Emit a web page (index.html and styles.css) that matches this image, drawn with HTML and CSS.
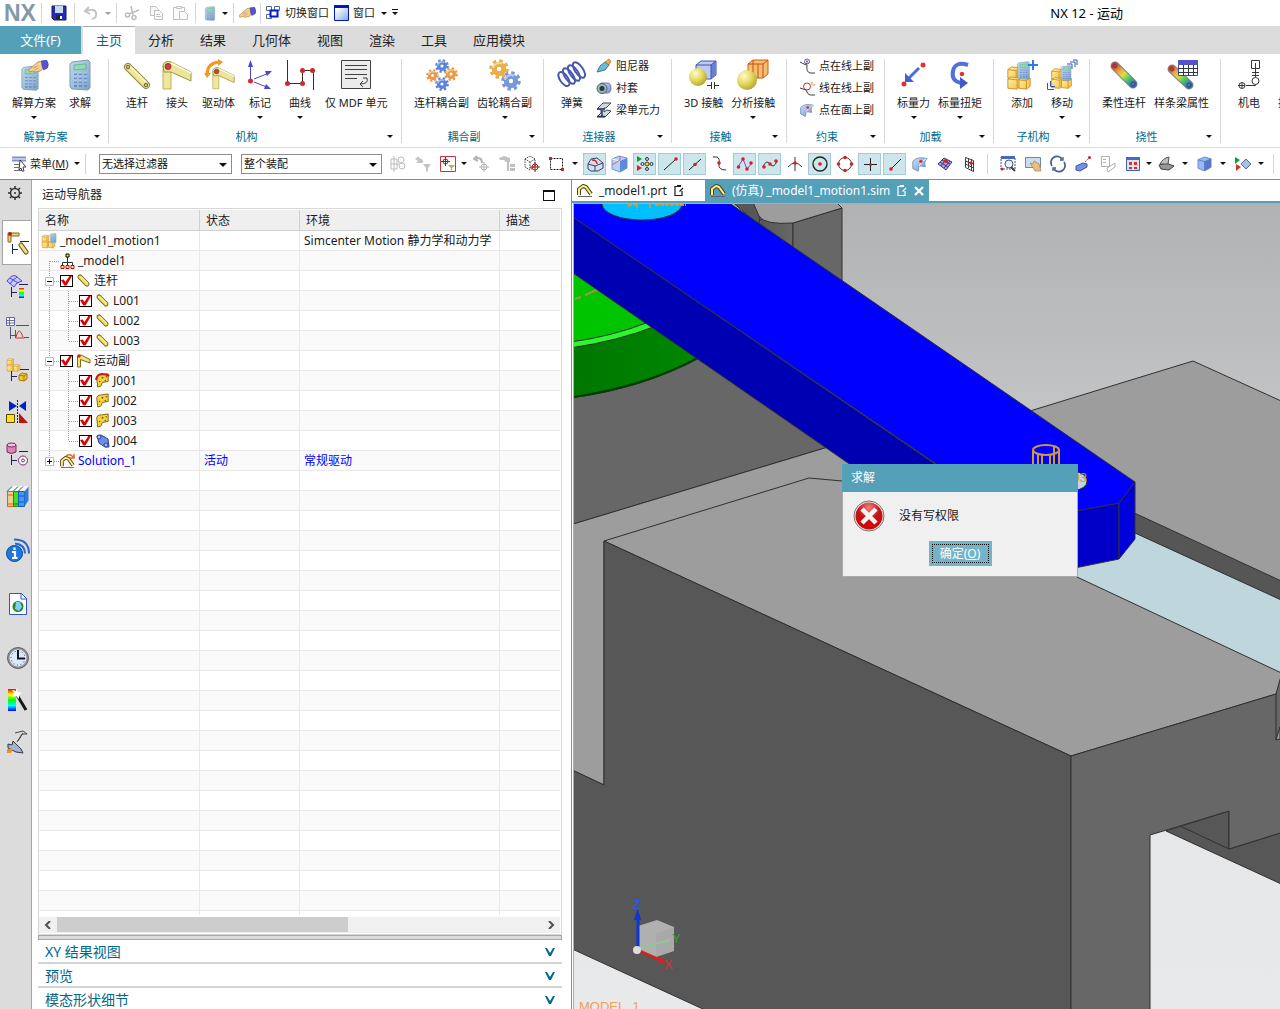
FILE: index.html
```html
<!DOCTYPE html>
<html lang="zh-CN">
<head>
    <meta charset="UTF-8">
    <meta name="viewport" content="width=device-width, initial-scale=1.0">
    <title>NX 12 - 运动</title>
    <link rel="stylesheet" href="styles.css">
</head>
<body>

<!-- Shared icon shapes -->
<svg class="sprite" aria-hidden="true">
    <defs>
        <linearGradient id="gBlue" x1="0" y1="0" x2="1" y2="1"><stop offset="0" stop-color="#cfe0f8"/><stop offset="1" stop-color="#6f8fd0"/></linearGradient>
        <linearGradient id="gCalc" x1="0" y1="0" x2="1" y2="1"><stop offset="0" stop-color="#c4dcec"/><stop offset="1" stop-color="#7ba3c4"/></linearGradient>
        <linearGradient id="gGold" x1="0" y1="0" x2="1" y2="1"><stop offset="0" stop-color="#fff4b0"/><stop offset="1" stop-color="#f4c03c"/></linearGradient>
        <radialGradient id="gBall" cx=".35" cy=".3" r=".8"><stop offset="0" stop-color="#fffbd0"/><stop offset=".5" stop-color="#e4d85c"/><stop offset="1" stop-color="#a89a2c"/></radialGradient>
        <linearGradient id="gRainbow" gradientUnits="userSpaceOnUse" x1="5" y1="6" x2="24" y2="26"><stop offset="0" stop-color="#e03030"/><stop offset=".3" stop-color="#f0a840"/><stop offset=".5" stop-color="#d8e040"/><stop offset=".7" stop-color="#50d060"/><stop offset="1" stop-color="#3060d0"/></linearGradient>
        <linearGradient id="gSpectrum" x1="0" y1="0" x2="0" y2="1"><stop offset="0" stop-color="#f00"/><stop offset=".25" stop-color="#ff0"/><stop offset=".5" stop-color="#0f0"/><stop offset=".75" stop-color="#0ff"/><stop offset="1" stop-color="#00f"/></linearGradient>
        <linearGradient id="gWin" x1="0" y1="0" x2="1" y2="1"><stop offset=".2" stop-color="#fff"/><stop offset="1" stop-color="#7fa8e0"/></linearGradient>
        <radialGradient id="gRed" cx=".5" cy=".2" r=".9"><stop offset="0" stop-color="#f08080"/><stop offset=".45" stop-color="#c41414"/><stop offset="1" stop-color="#d80000"/></radialGradient>
    </defs>
    <symbol id="calc" viewBox="0 0 22 32">
        <path d="M3 3 19 1 21 3V29L19 31 3 30 1 28V5z" fill="url(#gCalc)" stroke="#7c9cb4"/>
        <path d="M5 6 17 5v5L5 11z" fill="#8ce0b0" stroke="#5c9c84" stroke-width=".6"/>
        <path d="M5 15h3m2 0h3m2 0h3M5 19h3m2 0h3m2 0h3M5 23h3m2 0h3m2 0h3M5 27h3m2 0h3m2 0h3" stroke="#6c8cd0" stroke-width="2.2"/>
        <path d="M5 14h3m2 0h3m2 0h3M5 18h3m2 0h3m2 0h3M5 22h3m2 0h3m2 0h3" stroke="#c8dcf8" stroke-width=".8"/>
    </symbol>
    <symbol id="hand" viewBox="0 0 20 14">
        <path d="M0 10 6 5 9 2l5-1 2 6-4 4-5 1-3-1-3 1z" fill="#f4cf94" stroke="#b88440" stroke-width=".8"/>
        <path d="M5 8 9 6M6 10l4-2" stroke="#b88440" stroke-width=".7"/>
        <path d="M13 1 18 0q3 4 1 8l-4 2q-2-4-2-9z" fill="#5454d0" stroke="#3838a0" stroke-width=".6"/>
    </symbol>
    <symbol id="link" viewBox="0 0 30 30">
        <path d="M6 7 24 25" stroke="#8c8440" stroke-width="8" stroke-linecap="round"/>
        <path d="M6 7 24 25" stroke="#f0e898" stroke-width="6" stroke-linecap="round"/>
        <path d="M8 6 25 23" stroke="#fcf8d0" stroke-width="1.5"/>
        <circle cx="6" cy="7" r="1.800" fill="#c0b878" stroke="#706838"/><circle cx="24" cy="25" r="1.800" fill="#c0b878" stroke="#706838"/>
    </symbol>
    <!-- Small link, heavier outline for 15px use -->
    <symbol id="link-s" viewBox="0 0 15 15">
        <path d="M4 4 11 11" stroke="#7c6c18" stroke-width="5" stroke-linecap="round"/>
        <path d="M4 4 11 11" stroke="#f8e468" stroke-width="3" stroke-linecap="round"/>
        <path d="M5 3.500 11.500 10" stroke="#fffcc8"/>
    </symbol>
    <symbol id="joint" viewBox="0 0 30 30">
        <path d="M1 6V29H9V11z" fill="#f0e898" stroke="#b0a04c" stroke-width=".8"/>
        <path d="M1 5Q3 0 9 2L29 12V21L9 12 2 12z" fill="#ece498" stroke="#9c9048"/>
        <path d="M9 3 29 13" stroke="#fffce0" stroke-width="1.5"/>
        <circle cx="6" cy="6.500" r="3" fill="#d03c3c" stroke="#80402c"/>
    </symbol>
    <symbol id="joint-s" viewBox="0 0 15 15">
        <path d="M1.500 3V14H4.500V6.500L14 10V6.500L5 2z" fill="#f4e480" stroke="#7c6c18"/>
        <circle cx="3" cy="3" r="1.800" fill="#c03020"/>
    </symbol>
    <symbol id="gear" viewBox="0 0 20 20">
        <circle cx="10" cy="10" r="8" fill="none" stroke="currentColor" stroke-width="3.600" stroke-dasharray="3.300 2.980"/>
        <circle cx="10" cy="10" r="4.700" fill="none" stroke="currentColor" stroke-width="5"/>
        <path d="M4 9a6 6 0 0 1 9-4" fill="none" stroke="#fff" stroke-width="2" opacity=".5"/>
    </symbol>
    <symbol id="boxes" viewBox="0 0 28 26">
        <g fill="url(#gGold)" stroke="#d08c20">
            <path d="M2 4 6 1l8 1v9l-3 3-9-1z"/><path d="M2 4l9 1 3-3M11 5v8" fill="none"/>
            <path d="M2 14l4-2 9 1v9l-3 3-10-1z"/><path d="M2 14l10 1 3-2M12 15v9" fill="none"/>
            <path d="M14 15l3-3 9 1v9l-4 3-8-1z"/><path d="M14 15l8 1 4-3M22 16v9" fill="none"/>
        </g>
    </symbol>
    <symbol id="jointy" viewBox="0 0 16 16">
        <path d="M2 7Q1 2 7 2L14 1V9L8 10 6 14 3 15z" fill="#f8d444" stroke="#80600c"/>
        <circle cx="8" cy="5" r="1" fill="#705408"/><circle cx="12" cy="4" r=".8" fill="#705408"/><circle cx="5" cy="9" r=".8" fill="#705408"/><circle cx="11" cy="8" r=".8" fill="#705408"/>
    </symbol>
    <symbol id="mech" viewBox="0 0 16 13">
        <path d="M2 11V5L6 2l3 1 5 7" fill="none" stroke="#504810" stroke-width="4" stroke-linejoin="round"/>
        <path d="M2 11V5L6 2l3 1 5 7" fill="none" stroke="#f8ec90" stroke-width="2" stroke-linejoin="round"/>
        <path d="M1 12.500h14" stroke="#666"/>
    </symbol>
    <symbol id="cube" viewBox="0 0 16 16">
        <path d="M1 4 8 1l7 2v9l-7 4-7-3z" fill="#9cb8f0" stroke="#4868b8" stroke-width=".7"/>
        <path d="M1 4l7 2v10M8 6l7-3" fill="none" stroke="#4868b8" stroke-width=".7"/><path d="M8 6l7-3v9l-7 4z" fill="#5878cc"/>
    </symbol>
    <symbol id="edit" viewBox="0 0 12 13"><path d="M7 2.500H2v9h7V7M4 2.500h4M6.500 7.500 10 4" fill="none" stroke="currentColor" stroke-width="1.200"/><path d="M4 1h4v2H4z" fill="currentColor"/></symbol>
    <symbol id="surf" viewBox="0 0 20 20"><path d="M2 7Q7 1 18 4 14 7 16 13L9 12 8 18 2 15z" fill="url(#gBlue)" stroke="#6c94c4"/><path d="M9 12Q12 7 17 4" fill="none" stroke="#fff"/><circle cx="11" cy="7" r="1.800" fill="#d83030"/></symbol>

    <!-- Tree guide lines -->
    <symbol id="g-start" viewBox="0 0 19 20"><path d="M9.500 10V20M10 10.500H19" fill="none" stroke="#999" stroke-dasharray="1 1"/></symbol>
    <symbol id="g-bar" viewBox="0 0 19 20"><path d="M9.500 0V20" stroke="#999" stroke-dasharray="1 1"/></symbol>
    <symbol id="g-tee" viewBox="0 0 19 20"><path d="M9.500 0V20M10 10.500H19" stroke="#999" stroke-dasharray="1 1"/></symbol>
    <symbol id="g-end" viewBox="0 0 19 20"><path d="M9.500 0V10M10 10.500H19" stroke="#999" stroke-dasharray="1 1"/></symbol>
    <symbol id="g-minus" viewBox="0 0 19 20"><path d="M9.500 0V20M14 10.500H19" stroke="#999" stroke-dasharray="1 1"/><path d="M5.500 6.500h8v8h-8z" fill="#fff" stroke="#bbb"/><path d="M7 10.500h5" stroke="#000"/></symbol>
    <symbol id="g-plus" viewBox="0 0 19 20"><path d="M9.500 0V6M14 10.500H19" stroke="#999" stroke-dasharray="1 1"/><path d="M5.500 6.500h8v8h-8z" fill="#fff" stroke="#bbb"/><path d="M7 10.500h5M9.500 8v5" stroke="#000"/></symbol>
</svg>

<header class="titlebar">
    <span class="logo">NX</span>
    <i class="sep"></i>
    <button class="qa" aria-label="保存"><svg width="16" height="16"><path d="M1 1h14v14H3l-2-2z" fill="#2828c0" stroke="#182048"/><path d="M4 1h8v7H4z" fill="#c8dcf0"/><path d="M5 10h6v5H5z" fill="#202838"/><path d="M9 11h2v3H9z" fill="#fff"/></svg></button>
    <i class="sep"></i>
    <button class="qa" aria-label="撤销"><svg width="16" height="16"><path d="M6 2 2 6l5 3M3 6q9-3 10 2t-4 6" fill="none" stroke="#c4c4c4" stroke-width="2"/></svg></button>
    <i class="caret dim"></i>
    <i class="sep"></i>
    <button class="qa" aria-label="剪切"><svg width="16" height="16" fill="none" stroke="#bcbcbc" stroke-width="1.500"><path d="M7 1 9 10M15 5 5 9"/><circle cx="3.500" cy="10" r="2"/><circle cx="10" cy="12.500" r="2"/></svg></button>
    <button class="qa" aria-label="复制"><svg width="16" height="16" fill="#fafafa" stroke="#c0c0c0"><path d="M2.500 1.500h5l3 3v6h-8z"/><path d="M6.500 5.500h5l3 3v6h-8z"/><path d="M8 9.500h4M8 11.500h5" /></svg></button>
    <button class="qa" aria-label="粘贴"><svg width="17" height="16" fill="#fafafa" stroke="#c0c0c0"><path d="M1.500 2.500h11v12h-11z"/><path d="M4.500 1.500h5v2h-5z"/><path d="M7.500 6.500h5l3 3v5h-8z"/></svg></button>
    <i class="sep"></i>
    <button class="qa narrow" aria-label="求解"><svg width="12" height="15"><use href="#calc"/></svg></button>
    <i class="caret"></i>
    <i class="sep"></i>
    <button class="qa narrow" aria-label="触摸"><svg width="17" height="12"><use href="#hand"/></svg></button>
    <i class="sep"></i>
    <button class="qa-text"><svg width="16" height="16" fill="#fff"><path d="M1.500 1.500h5v4h-5zM9.500 1.500h5v4h-5zM1.500 9.500h5v4h-5z" stroke="#506880"/><path d="M5.500 5.500h7v6h-7z" stroke="#0018d8" stroke-width="2"/></svg>切换窗口</button>
    <button class="qa-text"><svg width="15" height="16"><path d="M.500.500h14v15H.500z" fill="url(#gWin)" stroke="#0018c0"/><path d="M0 0h15v3H0z" fill="#0018c0"/></svg>窗口<i class="caret"></i></button>
    <i class="caret bar"></i>
    <h1 class="app-title">NX 12 - 运动</h1>
</header>

<nav class="tabs">
    <button class="tab file">文件(F)</button>
    <button class="tab active">主页</button>
    <button class="tab">分析</button>
    <button class="tab">结果</button>
    <button class="tab">几何体</button>
    <button class="tab">视图</button>
    <button class="tab">渲染</button>
    <button class="tab">工具</button>
    <button class="tab">应用模块</button>
</nav>

<section class="ribbon">
    <div class="group g-solution">
        <div class="tools">
            <button class="big"><svg width="30" height="32"><use href="#calc" x="2" y="6" width="18" height="26"/><use href="#hand" x="9" y="1" width="21" height="14"/></svg>解算方案<i class="caret"></i></button>
            <button class="big"><svg width="22" height="32"><use href="#calc"/></svg>求解</button>
        </div>
        <div class="group-name">解算方案<i class="caret"></i></div>
    </div>
    <div class="group g-mech">
        <div class="tools">
            <button class="big"><svg width="30" height="30"><use href="#link"/></svg>连杆</button>
            <button class="big"><svg width="30" height="30"><use href="#joint"/></svg>接头</button>
            <button class="big"><svg width="32" height="32"><use href="#joint" x="9" y="7" width="23" height="24"/><path d="M4 16Q4 4 16 3" fill="none" stroke="#f09820" stroke-width="3"/><path d="M15 0 20 3 15 7zM1 14h7l-4 5z" fill="#f09820"/></svg>驱动体</button>
            <button class="big"><svg width="30" height="32" stroke="#4848d0"><path d="M5.500 20V4M9 20 24 14M9 23 24 29"/><path d="M5.500 1l2.500 7H3zM27 12l-5 5-2-5zM26 30l-7 0 2-5z" fill="#4848d0" stroke="none"/><circle cx="5.500" cy="22" r="2.500" fill="#e02828" stroke="none"/></svg>标记<i class="caret"></i></button>
            <button class="big"><svg width="30" height="32"><path d="M2.500 1V24.500H17.500V11.500H28.500V31" fill="none" stroke="#303030"/><g fill="#d02828"><circle cx="2.500" cy="24.500" r="2.500"/><circle cx="17.500" cy="24.500" r="2.500"/><circle cx="17.500" cy="11.500" r="2.500"/><circle cx="27.500" cy="11.500" r="2.500"/></g></svg>曲线<i class="caret"></i></button>
            <button class="big"><svg width="30" height="30"><path d="M.500.500h29v28h-29z" fill="#ececec" stroke="#404040"/><path d="M4 5.500h22M4 9.500h22M4 14.500h22M4 18.500h12M22 18h4q2 6-7 6M22 21l-3 3 3 3" fill="none" stroke="#404040"/></svg>仅 MDF 单元</button>
        </div>
        <div class="group-name">机构<i class="caret"></i></div>
    </div>
    <div class="group g-couple">
        <div class="tools">
            <button class="big"><svg width="32" height="32"><g color="#5c84dc"><use href="#gear" x="9" y="0" width="14" height="14"/><use href="#gear" x="9" y="18" width="14" height="14"/></g><g color="#e89c48"><use href="#gear" x="0" y="10" width="13" height="13"/><use href="#gear" x="18" y="8" width="14" height="14"/></g></svg>连杆耦合副</button>
            <button class="big"><svg width="32" height="32"><use href="#gear" x="0" y="0" width="20" height="20" color="#e8b048"/><use href="#gear" x="12" y="12" width="20" height="20" color="#7898dc"/></svg>齿轮耦合副<i class="caret"></i></button>
        </div>
        <div class="group-name">耦合副<i class="caret"></i></div>
    </div>
    <div class="group g-connect">
        <div class="tools">
            <button class="big"><svg width="30" height="30" fill="none" stroke="#4858b0" stroke-width="2"><ellipse cx="7" cy="19" rx="4" ry="8" transform="rotate(-35 7 19)"/><ellipse cx="12" cy="16" rx="4" ry="9" transform="rotate(-35 12 16)"/><ellipse cx="17" cy="13" rx="4" ry="9" transform="rotate(-35 17 13)"/><ellipse cx="22" cy="10" rx="4" ry="9" transform="rotate(-35 22 10)"/></svg>弹簧</button>
            <div class="small-list">
                <button class="small"><svg width="16" height="16"><path d="M1 14 4 8 9 4l4 3-4 5z" fill="#70b8dc" stroke="#38789c"/><path d="M9 4l4-3 2 2-2 4z" fill="#f0a848" stroke="#a06820" stroke-width=".6"/></svg>阻尼器</button>
                <button class="small"><svg width="16" height="16"><path d="M5 3h6q4 0 4 5t-4 5H5z" fill="url(#gBlue)" stroke="#6878a8"/><circle cx="6" cy="8.500" r="5" fill="#9cb8b0" stroke="#506070"/><circle cx="6" cy="8.500" r="2.500" fill="#283848"/></svg>衬套</button>
                <button class="small"><svg width="16" height="16"><path d="M1 7 7 1h8l-5 5H8v4l3-2 4 1-6 6H1l4-4V7z" fill="#d4d8e0" stroke="#404858"/><path d="M1 7h8M6 8v6M1 14.500h8" stroke="#2c3468" stroke-width="1.500"/></svg>梁单元力</button>
            </div>
        </div>
        <div class="group-name">连接器<i class="caret"></i></div>
    </div>
    <div class="group g-contact">
        <div class="tools">
            <button class="big"><svg width="30" height="32"><path d="M7 6 12 2h15v14l-5 4H7z" fill="#bccbf4" stroke="#4050b8"/><path d="M22 6l5-4v14l-5 4z" fill="#6c80d0"/><path d="M7 6h15l5-4M22 6v14" fill="none" stroke="#4050b8"/><circle cx="9" cy="18" r="9" fill="url(#gBall)"/><path d="M18 26.500h4M26 26.500h4M22.500 23v7M25.500 23v7" stroke="#303030"/></svg>3D 接触</button>
            <button class="big"><svg width="32" height="32"><path d="M11 5 16 1h15v14l-5 4H11z" fill="#f8c068" stroke="#c46020"/><path d="M11 5h15l5-4M16 1v15M21 5v14M26 5v14" fill="none" stroke="#c84c20"/><circle cx="10" cy="21" r="10" fill="url(#gBall)"/></svg>分析接触<i class="caret"></i></button>
        </div>
        <div class="group-name">接触<i class="caret"></i></div>
    </div>
    <div class="group g-constrain">
        <div class="tools">
            <div class="small-list">
                <button class="small"><svg width="16" height="16" fill="none" stroke="#404040"><path d="M1 4l6 3 1-2M8 7q-1 7 3 8h5"/><circle cx="8" cy="3.500" r="2.500" stroke="#4858c8"/><circle cx="8" cy="3.500" r="1" fill="#e02020" stroke="none"/></svg>点在线上副</button>
                <button class="small"><svg width="16" height="16" fill="none" stroke="#404040"><path d="M1 8l6 2q2 5 4 5h5"/><circle cx="8" cy="6.500" r="3.500" stroke="#d03030"/><path d="M13 2v3M15 4v2" stroke="#e08030"/></svg>线在线上副</button>
                <button class="small"><svg width="16" height="16"><use href="#surf"/></svg>点在面上副</button>
            </div>
        </div>
        <div class="group-name">约束<i class="caret"></i></div>
    </div>
    <div class="group g-load">
        <div class="tools">
            <button class="big"><svg width="30" height="32"><path d="M20 9 9 20" stroke="#4c6ce0" stroke-width="3"/><path d="M6 23V14l9 9z" fill="#4060d8"/><circle cx="24" cy="6" r="2.500" fill="#e03030"/><circle cx="5" cy="25" r="2.500" fill="#e03030"/></svg>标量力<i class="caret"></i></button>
            <button class="big"><svg width="26" height="32"><path d="M21 6Q8 2 6 12T14 24" fill="none" stroke="#5070dc" stroke-width="4"/><path d="M13 18l8 6-8 6z" fill="#4058c8"/><circle cx="15" cy="15" r="2.200" fill="#e03030"/></svg>标量扭矩<i class="caret"></i></button>
        </div>
        <div class="group-name">加载<i class="caret"></i></div>
    </div>
    <div class="group g-sub">
        <div class="tools">
            <button class="big"><svg width="32" height="32"><use href="#boxes" x="0" y="6" width="26" height="26"/><use href="#calc" x="11" y="2" width="13" height="19"/><path d="M27 1v10M22 6h10" stroke="#2c7ce8" stroke-width="2"/></svg>添加</button>
            <button class="big"><svg width="32" height="32"><use href="#boxes" x="4" y="8" width="23" height="23"/><use href="#calc" x="14" y="6" width="12" height="16"/><path d="M21 5h5v5M24 3h5v5M27 1h4v5" fill="none" stroke="#3850b8"/><path d="M1.500 24v6.500H8M4.500 22v5.500H9" fill="none" stroke="#3850b8"/></svg>移动<i class="caret"></i></button>
        </div>
        <div class="group-name">子机构<i class="caret"></i></div>
    </div>
    <div class="group g-flex">
        <div class="tools">
            <button class="big"><svg width="30" height="32"><path d="M6 7 24 25" stroke="#788880" stroke-width="9" stroke-linecap="round"/><path d="M6 7 24 25" stroke="url(#gRainbow)" stroke-width="7" stroke-linecap="round"/><circle cx="6" cy="7" r="2" fill="#b44040" stroke="#704848"/><circle cx="24" cy="25" r="2" fill="#5078b0" stroke="#384868"/></svg>柔性连杆</button>
            <button class="big"><svg width="32" height="32"><path d="M6 10 23 26" stroke="#788880" stroke-width="9" stroke-linecap="round"/><path d="M6 10 23 26" stroke="url(#gRainbow)" stroke-width="7" stroke-linecap="round"/><circle cx="6" cy="10" r="2" fill="#b44040" stroke="#704848"/><circle cx="23" cy="26" r="2" fill="#5078b0" stroke="#384868"/><path d="M12.500 1.500h19v15h-19z" fill="#fff" stroke="#404888"/><path d="M12 1h20v5H12z" fill="#5454c8"/><path d="M12 9.500h20M12 13.500h20M17.500 6v11M22.500 6v11M27.500 6v11" stroke="#303848"/></svg>样条梁属性</button>
        </div>
        <div class="group-name">挠性<i class="caret"></i></div>
    </div>
    <div class="group g-control">
        <div class="tools">
            <button class="big"><svg width="24" height="32" fill="none" stroke="#383838"><path d="M14.500 1.500h8v8h-8zM18.500 4v14M15 13.500h7M15 16.500h7"/><circle cx="18.500" cy="22" r="3.500"/><path d="M18.500 25.500v1H9"/><circle cx="5" cy="26.500" r="3"/><path d="M1 26.500h7M5 24v5"/></svg>机电</button>
            <button class="big"><svg width="24" height="32"></svg>控制</button>
        </div>
    </div>
</section>

<section class="toolbar">
    <button class="menu-btn"><svg width="16" height="16"><path d="M1 1.500h14M1 4.500h14" stroke="#8090c8" stroke-width="2"/><path d="M3 8.500h8M3 11.500h8M3 14.500h8" stroke="#707070"/><path d="M9 4l6 7-3 0 1 4-2 0-1-3-2 2z" fill="#fff" stroke="#404040"/></svg>菜单(<u>M</u>)<i class="caret"></i></button>
    <i class="sep"></i>
    <label class="combo filter"><select aria-label="选择过滤器"><option>无选择过滤器</option></select></label>
    <label class="combo scope"><select aria-label="选择范围"><option>整个装配</option></select></label>
    <div class="icons">
        <button class="ic" aria-label="约束"><svg width="18" height="18" fill="none" stroke="#bcbcbc"><path d="M2 4h6v10H2zM5 1v16M2 9h8"/><circle cx="12" cy="5" r="3"/><circle cx="13" cy="11" r="3"/></svg></button>
        <button class="ic" aria-label="重置过滤器"><svg width="18" height="18" fill="#c4c4c4"><path d="M1 4l4-3v2q5 1 4 5H2l2-2zM9 9h8l-3 4v4l-2-1v-3z"/></svg></button>
        <button class="ic" aria-label="捕捉过滤器"><svg width="16" height="16"><path d="M.5.500h15v15H.500z" fill="#fff" stroke="#d03040"/><circle cx="5.500" cy="5.500" r="2.500" fill="none" stroke="#404040"/><path d="M5.500 1v9M1 5.500h9" stroke="#404040"/><path d="M8 9h7l-3 3v3l-1-1v-2z" fill="#e8a020"/></svg></button>
        <i class="caret"></i>
        <button class="ic" aria-label="取消选择"><svg width="18" height="18" fill="none" stroke="#b4b4b4"><path d="M4 1 1 4l4 2M1 4q8-3 8 4" stroke-width="2"/><circle cx="11" cy="12" r="3"/><path d="M11 7v10M6 12h10"/></svg></button>
        <button class="ic" aria-label="在导航器中查找"><svg width="18" height="18" fill="#c0c0c0"><path d="M1 3l5-2 6 2v4H8L6 5H2zM9 7h2v9H9zM12 9h5v3h-5zM12 13h5v3h-5z"/></svg></button>
        <button class="ic" aria-label="选择对象"><svg width="18" height="18" fill="none" stroke="#404040"><path d="M2 4 7 1l5 3v7l-5 4-5-3zM2 4l5 3 5-3M7 7v7" stroke-dasharray="1.500 1"/><circle cx="12" cy="12" r="3" stroke="#c02020"/><path d="M12 7v10M7 12h10" stroke="#802020"/></svg></button>
        <button class="ic" aria-label="矩形选择"><svg width="18" height="16"><path d="M2.500 2.500h12v11h-12z" fill="none" stroke="#202020" stroke-dasharray="2 1"/><path d="M1 1h3v3H1zM13 12h3v3h-3z" fill="#d02020"/></svg></button>
        <i class="caret wide"></i>
        <button class="ic on" aria-label="面选择"><svg width="18" height="18"><path d="M2 9 5 4l6-1 6 5v5l-5 3H5l-3-2z" fill="#d4e0f0" stroke="#384060"/><path d="M2 9l7 2 8-3M9 11v5" fill="none" stroke="#384060"/><path d="M6 5q5 0 5 4" fill="none" stroke="#e02020" stroke-width="1.500"/></svg></button>
        <button class="ic" aria-label="体选择"><svg width="18" height="18"><path d="M1 4l7-3 8 2v10l-7 4-8-3z" fill="#b4d0f4" stroke="#7098d0"/><path d="M9 6l7-3v10l-7 4z" fill="#5c8cd8"/><path d="M1 4l8 2" stroke="#fff"/><path d="M1 10l8-5v-4" fill="none" stroke="#e06070"/></svg></button>
        <button class="ic on" aria-label="启用捕捉点"><svg width="18" height="18"><path d="M1 1l5 3-5 3z" fill="#10a020"/><path d="M1 10l5 3-5 3z" fill="#e02020"/><circle cx="11" cy="9" r="2" fill="#f8d820" stroke="#404040"/><g fill="none" stroke="#303030"><circle cx="11" cy="4" r="1.500"/><circle cx="11" cy="14" r="1.500"/><circle cx="6.500" cy="9" r="1.500"/><circle cx="15.500" cy="9" r="1.500"/></g></svg></button>
        <button class="ic on" aria-label="端点"><svg width="18" height="18"><path d="M3 15 15 4" stroke="#202020"/><circle cx="15" cy="4" r="1.800" fill="#d82020"/></svg></button>
        <button class="ic on" aria-label="中点"><svg width="18" height="18"><path d="M3 15 15 4" stroke="#202020"/><circle cx="9" cy="9.500" r="1.800" fill="#d82020"/></svg></button>
        <button class="ic" aria-label="控制点"><svg width="18" height="18"><path d="M2 2h4q3 1 2 7t7 6" fill="none" stroke="#303030"/><circle cx="8" cy="8" r="1.800" fill="#d82020"/></svg></button>
        <button class="ic on" aria-label="极点"><svg width="18" height="18"><path d="M2 12 7 4l4 10 5-6" fill="none" stroke="#8040c0"/><g fill="#d82020"><circle cx="2.500" cy="12" r="1.800"/><circle cx="7" cy="4" r="1.800"/><circle cx="11" cy="14" r="1.800"/><circle cx="15" cy="8" r="1.800"/></g></svg></button>
        <button class="ic on" aria-label="定义点"><svg width="18" height="18"><path d="M2 12q3-8 7-3t7-3" fill="none" stroke="#303030"/><g fill="#d82020"><circle cx="3" cy="12" r="1.800"/><circle cx="9" cy="9" r="1.800"/><circle cx="15" cy="6" r="1.800"/></g></svg></button>
        <button class="ic" aria-label="交点"><svg width="18" height="18"><path d="M9 2v14M2 12q7-8 14 0" fill="none" stroke="#303030"/><circle cx="9" cy="8" r="1.800" fill="#d82020"/></svg></button>
        <button class="ic on" aria-label="圆心"><svg width="18" height="18"><circle cx="9" cy="9" r="7" fill="none" stroke="#202020" stroke-width="1.300"/><circle cx="9" cy="9" r="1.800" fill="#c02020"/></svg></button>
        <button class="ic" aria-label="象限点"><svg width="18" height="18"><circle cx="9" cy="9" r="6.500" fill="none" stroke="#303030"/><g fill="#d82020"><circle cx="9" cy="2.500" r="1.800"/><circle cx="9" cy="15.500" r="1.800"/><circle cx="2.500" cy="9" r="1.800"/><circle cx="15.500" cy="9" r="1.800"/></g></svg></button>
        <button class="ic on" aria-label="现有点"><svg width="18" height="18"><path d="M9.500 3v13M3 9.500h13" stroke="#202020"/><circle cx="9.500" cy="9.500" r="1.500" fill="#c02020"/></svg></button>
        <button class="ic on" aria-label="曲线上的点"><svg width="18" height="18"><path d="M4 15 15 4" stroke="#202020"/><circle cx="5" cy="14" r="1.800" fill="#d82020"/></svg></button>
        <button class="ic" aria-label="面上的点"><svg width="18" height="18"><use href="#surf"/></svg></button>
        <button class="ic" aria-label="小平面顶点"><svg width="18" height="18"><path d="M2 9 8 3l8 4-6 8z" fill="#a8a0e0" stroke="#403880"/><path d="M4 7l8 5M6 5l8 4M5 11l5-7M8 13l6-7" stroke="#403880"/><circle cx="10" cy="6" r="2" fill="#d82020"/></svg></button>
        <button class="ic" aria-label="栅格点"><svg width="18" height="18"><path d="M4.500 2.500l8 3v11l-8-4zM4.500 6l8 3M4.500 9l8 4M7.500 3v10M10.500 4v11" fill="none" stroke="#404040"/><circle cx="10" cy="8" r="1.800" fill="#d82020"/></svg></button>
        <i class="sep"></i>
        <button class="ic" aria-label="适合窗口"><svg width="18" height="18"><path d="M2 2h14v12H2z" fill="none" stroke="#4050a0" stroke-dasharray="2 1"/><path d="M2 1h14v3H2z" fill="#4868c0"/><circle cx="10" cy="9" r="4" fill="#e8f0f8" stroke="#505860"/><path d="M12 12l4 4" stroke="#404040" stroke-width="2"/><circle cx="3" cy="14" r="1.500" fill="#d02020"/></svg></button>
        <button class="ic" aria-label="平移"><svg width="18" height="18"><path d="M1.500 2.500h15v10h-15z" fill="#ccdcf0" stroke="#7088a8"/><path d="M6 8l3 1 1-3 5 3 2 7-6 0z" fill="#e8c080" stroke="#a87c3c" stroke-width=".7"/></svg></button>
        <button class="ic" aria-label="旋转"><svg width="18" height="18" fill="none" stroke="#485890" stroke-width="1.700"><path d="M3 11A6 6 0 0 1 13 4M15 7A6 6 0 0 1 5 14"/><path d="M14 2v3h-3M4 16v-3h3" stroke-width="1.300"/></svg></button>
        <button class="ic" aria-label="透视"><svg width="18" height="18"><path d="M2 11l7-3 4 1v3l-7 4-4-1z" fill="#7890e0" stroke="#4050a8"/><path d="M11 7l4-4" stroke="#e04040" stroke-dasharray="2 1"/><circle cx="15.500" cy="2.500" r="1.500" fill="#d02020"/></svg></button>
        <button class="ic" aria-label="定向视图"><svg width="18" height="18" fill="none" stroke="#b0b0b0"><path d="M2.500 1.500h8v10h-8zM4 4.500h3M4 7.500h3M8 13l8-5v4l-7 5z"/></svg></button>
        <button class="ic" aria-label="视图布局"><svg width="18" height="18"><path d="M2.500 2.500h13v13h-13z" fill="#d8e4f4" stroke="#4060b0"/><path d="M2 2h14v3H2z" fill="#4868c8"/><path d="M5 7h3v3H5zM10 7h3v3h-3zM5 12h3v2H5zM10 12h3v2h-3z" fill="#e03020"/></svg></button>
        <i class="caret"></i>
        <button class="ic" aria-label="剪切截面"><svg width="18" height="18"><path d="M1 10 8 8l8 3-5 4-8-1z" fill="#989898" stroke="#404040"/><path d="M2 9Q5 3 11 2L10 9z" fill="#c0c0c0" stroke="#505050"/></svg></button>
        <i class="caret wide"></i>
        <button class="ic" aria-label="渲染样式"><svg width="15" height="15"><use href="#cube"/></svg></button>
        <i class="caret wide"></i>
        <button class="ic" aria-label="显示和隐藏"><svg width="18" height="18"><path d="M1 2l5 3-5 4z" fill="#10a030"/><path d="M2 9l5 3-5 4z" fill="#d03030"/><path d="M7 9l5-5 5 5-5 5z" fill="#a8c0e8" stroke="#5068a0"/></svg></button>
        <i class="caret wide"></i>
        <i class="sep"></i>
    </div>
</section>

<main class="work">
    <aside class="rail">
        <button class="rb gear-btn" aria-label="设置"><svg width="14" height="14"><circle cx="7" cy="7" r="4.500" fill="none" stroke="#303030" stroke-width="1.500"/><path d="M7 0v3M7 11v3M0 7h3M11 7h3M2 2l2 2M10 10l2 2M12 2l-2 2M4 10l-2 2" stroke="#303030" stroke-width="1.500"/><circle cx="7" cy="7" r="1" fill="#303030"/></svg></button>
        <button class="rb active" aria-label="运动导航器"><svg width="24" height="24"><path d="M1 11V2h11v3H4v6z" fill="#ecd468" stroke="#806820"/><circle cx="3" cy="3" r="2" fill="#c02020"/><path d="M13 10.500h9M5.500 13v10M6 18.500h5" stroke="#202060"/><path d="M14 14l5 7" stroke="#6c5c20" stroke-width="5" stroke-linecap="round"/><path d="M14 14l5 7" stroke="#f0e088" stroke-width="3" stroke-linecap="round"/></svg></button>
        <button class="rb" aria-label="仿真导航器"><svg width="24" height="24"><path d="M1 7Q6 0 10 2l6 5-5 2-3 4z" fill="#c8c8fc" stroke="#4848d0"/><path d="M4 4l8 5M11 3q-5 3-7 7" fill="none" stroke="#4848d0"/><path d="M13 10.500h9M5.500 13v10M6 18.500h5" stroke="#202060"/><path d="M13 14h5v10h-5z" fill="url(#gSpectrum)"/></svg></button>
        <button class="rb" aria-label="XY 函数导航器"><svg width="24" height="24"><path d="M.500 1.500h8v8h-8z" fill="#fff" stroke="#6868a0"/><path d="M1 4.500h8M1 7h8M3.500 2v8" stroke="#6868a0"/><path d="M10 9.500h13M4.500 11v12M5 19.500h5M18 21.500h5" stroke="#505070"/><path d="M9.500 14v8h9M10 21q3-12 7 0" fill="none" stroke="#d02838"/></svg></button>
        <button class="rb" aria-label="装配导航器"><svg width="24" height="24"><use href="#boxes" x="0" y="0" width="15" height="14"/><path d="M14 11.500h9M5.500 13v10M6 18.500h5" stroke="#202060"/><path d="M13 17l3-2 5 1v5l-3 2-5-1z" fill="#f4c430" stroke="#a87810"/><path d="M13 17l5 1 3-2M18 18v5" fill="none" stroke="#a87810"/></svg></button>
        <button class="rb" aria-label="约束导航器"><svg width="24" height="24"><path d="M3 1l8 5-8 5zM20 1l-7 5 7 5z" fill="#0020c8"/><path d="M11.500 0v24" stroke="#202020" stroke-dasharray="2 1"/><path d="M.500 14.500h8v8h-8z" fill="#ffe020" stroke="#604800"/><path d="M13 13l9 10h-9z" fill="#c01010"/></svg></button>
        <button class="rb" aria-label="部件导航器"><svg width="24" height="24"><path d="M1 3v7q4 3 9 0V3" fill="#d888b8" stroke="#802860"/><ellipse cx="5.500" cy="3" rx="4.500" ry="2" fill="#f0c0dc" stroke="#802860"/><path d="M13 9.500h9M5.500 13v10M6 18.500h5" stroke="#202060"/><circle cx="17" cy="18.500" r="4.500" fill="#fff" stroke="#802870"/><circle cx="17" cy="18.500" r="1.500" fill="#fff" stroke="#802870"/></svg></button>
        <button class="rb" aria-label="重用库"><svg width="24" height="24"><path d="M1 7l5-5h16v14l-4 6H1z" fill="#f8f8f8"/><path d="M1.500 7.500h6v15h-6z" fill="#f4cc90" stroke="#d06810"/><path d="M7.500 7.500h5v15h-5z" fill="#40e020" stroke="#189010"/><path d="M12.500 7.500h6v15h-6z" fill="#38a0f0" stroke="#1858c0"/><path d="M18.500 7.500l4-5v14l-4 6z" fill="#3878e0"/><path d="M1 7.500l5-5M7 7.500l5-5M12 7.500l5-5" stroke="#206040"/><path d="M2 11h5M2 20h5" stroke="#d06810"/><path d="M8 20h4" stroke="#108010"/><path d="M13 12h5M13 18h5" stroke="#1858c0"/></svg></button>
        <button class="rb spaced" aria-label="HD3D 工具"><svg width="24" height="24"><circle cx="8.500" cy="15.500" r="8" fill="#1c78e0" stroke="#104898"/><path d="M6 14h3v6M6 20h5.500M8.500 9.500v2.500" stroke="#fff" stroke-width="2.200" fill="none"/><path d="M8 1.500q15 0 15 14M9 5.500q10 1 10 10" fill="none" stroke="#2c64cc" stroke-width="2"/></svg></button>
        <button class="rb spaced" aria-label="Web 浏览器"><svg width="20" height="24"><path d="M1.500 1.500h12l5 5v16h-17z" fill="#fff" stroke="#2858c8"/><path d="M13 1v6h6" fill="none" stroke="#2858c8"/><circle cx="10" cy="14.500" r="5.500" fill="#288828"/><path d="M8 10l4 0 2 5-3 4-4-2z" fill="#80d0f0"/></svg></button>
        <button class="rb spaced" aria-label="历史记录"><svg width="24" height="24"><circle cx="12" cy="12" r="10.500" fill="#909498" stroke="#606468"/><circle cx="12" cy="12" r="8.500" fill="#dceafc"/><circle cx="12" cy="12" r="7" fill="none" stroke="#303848" stroke-dasharray="1 2.670"/><path d="M12 4v8.500H19" fill="none" stroke="#101828" stroke-width="2"/></svg></button>
        <button class="rb" aria-label="系统材料"><svg width="22" height="24"><path d="M1 1h8v22H1z" fill="url(#gSpectrum)"/><path d="M10 7l9 15" stroke="#181818" stroke-width="3"/><path d="M10 0l1 4 4 1-3 2 0 4-3-3-4 1 2-4-2-3 4 1z" fill="#fff"/></svg></button>
        <button class="rb" aria-label="加工向导"><svg width="24" height="24"><path d="M9 3l8-2 4 3-5 0-5 8M17 3l-5 8" fill="none" stroke="#404848"/><path d="M2 14l4 1 1-4 3 3 5 5 2 4-7-1-8-4z" fill="#a8b4c8" stroke="#303848"/><path d="M1 19l6 0-2 4-4 0z" fill="#f09020"/></svg></button>
    </aside>

    <section class="navigator">
        <div class="nav-head"><h2>运动导航器</h2><button class="max-btn" aria-label="最大化"></button></div>
        <div class="tree-box">
            <div class="tree-clip">
                <table class="tree">
                    <colgroup><col class="c-name"><col class="c-state"><col class="c-env"><col></colgroup>
                    <thead><tr><th>名称</th><th>状态</th><th>环境</th><th>描述</th></tr></thead>
                    <tbody>
                        <tr><td><div class="node root"><svg width="16" height="16"><use href="#boxes" x="0" y="1" width="15" height="15"/><use href="#calc" x="8" y="0" width="8" height="10"/></svg><span>_model1_motion1</span></div></td><td></td><td>Simcenter Motion 静力学和动力学</td><td></td></tr>
                        <tr><td><div class="node"><svg class="guide"><use href="#g-start"/></svg><svg width="15" height="16"><path d="M7.500 4v5M2.500 12V9.500h10V12M7.500 9v3" fill="none" stroke="#303030"/><path d="M6 1h3v3H6z" fill="#ff0" stroke="#000"/><path d="M1 12.500h3v3H1zM6 12.500h3v3H6zM11 12.500h3v3h-3z" fill="#ff8" stroke="#c00000"/></svg><span>_model1</span></div></td><td></td><td></td><td></td></tr>
                        <tr><td><div class="node"><svg class="guide"><use href="#g-minus"/></svg><input type="checkbox" id="k1" checked><svg width="15" height="15"><use href="#link-s"/></svg><label for="k1">连杆</label></div></td><td></td><td></td><td></td></tr>
                        <tr><td><div class="node"><svg class="guide"><use href="#g-bar"/></svg><svg class="guide"><use href="#g-tee"/></svg><input type="checkbox" id="k2" checked><svg width="15" height="15"><use href="#link-s"/></svg><label for="k2">L001</label></div></td><td></td><td></td><td></td></tr>
                        <tr><td><div class="node"><svg class="guide"><use href="#g-bar"/></svg><svg class="guide"><use href="#g-tee"/></svg><input type="checkbox" id="k3" checked><svg width="15" height="15"><use href="#link-s"/></svg><label for="k3">L002</label></div></td><td></td><td></td><td></td></tr>
                        <tr><td><div class="node"><svg class="guide"><use href="#g-bar"/></svg><svg class="guide"><use href="#g-end"/></svg><input type="checkbox" id="k4" checked><svg width="15" height="15"><use href="#link-s"/></svg><label for="k4">L003</label></div></td><td></td><td></td><td></td></tr>
                        <tr><td><div class="node"><svg class="guide"><use href="#g-minus"/></svg><input type="checkbox" id="k5" checked><svg width="15" height="15"><use href="#joint-s"/></svg><label for="k5">运动副</label></div></td><td></td><td></td><td></td></tr>
                        <tr><td><div class="node"><svg class="guide"><use href="#g-bar"/></svg><svg class="guide"><use href="#g-tee"/></svg><input type="checkbox" id="k6" checked><svg width="15" height="15"><use href="#jointy"/><path d="M1 7q1-6 6-6t7 2" fill="none" stroke="#c81818" stroke-width="2"/></svg><label for="k6">J001</label></div></td><td></td><td></td><td></td></tr>
                        <tr><td><div class="node"><svg class="guide"><use href="#g-bar"/></svg><svg class="guide"><use href="#g-tee"/></svg><input type="checkbox" id="k7" checked><svg width="15" height="15"><use href="#jointy"/></svg><label for="k7">J002</label></div></td><td></td><td></td><td></td></tr>
                        <tr><td><div class="node"><svg class="guide"><use href="#g-bar"/></svg><svg class="guide"><use href="#g-tee"/></svg><input type="checkbox" id="k8" checked><svg width="15" height="15"><use href="#jointy"/></svg><label for="k8">J003</label></div></td><td></td><td></td><td></td></tr>
                        <tr><td><div class="node"><svg class="guide"><use href="#g-bar"/></svg><svg class="guide"><use href="#g-end"/></svg><input type="checkbox" id="k9" checked><svg width="15" height="15"><path d="M2 3l4-1 7 4 1 8-4 0-6-4z" fill="#6c90e4" stroke="#283c98"/><circle cx="4" cy="4" r="2" fill="#a8c0f4" stroke="#283c98"/><circle cx="11" cy="12" r="2" fill="#a8c0f4" stroke="#283c98"/></svg><label for="k9">J004</label></div></td><td></td><td></td><td></td></tr>
                        <tr class="current"><td><div class="node"><svg class="guide"><use href="#g-plus"/></svg><svg width="15" height="16"><use href="#mech" x="0" y="3" width="15" height="12"/><path d="M6 3q4-3 7 1M14 1v4h-4" fill="none" stroke="#e86820" stroke-width="1.500"/></svg><span>Solution_1</span></div></td><td>活动</td><td>常规驱动</td><td></td></tr>
                        <tr><td></td><td></td><td></td><td></td></tr>
                        <tr><td></td><td></td><td></td><td></td></tr>
                        <tr><td></td><td></td><td></td><td></td></tr>
                        <tr><td></td><td></td><td></td><td></td></tr>
                        <tr><td></td><td></td><td></td><td></td></tr>
                        <tr><td></td><td></td><td></td><td></td></tr>
                        <tr><td></td><td></td><td></td><td></td></tr>
                        <tr><td></td><td></td><td></td><td></td></tr>
                        <tr><td></td><td></td><td></td><td></td></tr>
                        <tr><td></td><td></td><td></td><td></td></tr>
                        <tr><td></td><td></td><td></td><td></td></tr>
                        <tr><td></td><td></td><td></td><td></td></tr>
                        <tr><td></td><td></td><td></td><td></td></tr>
                        <tr><td></td><td></td><td></td><td></td></tr>
                        <tr><td></td><td></td><td></td><td></td></tr>
                        <tr><td></td><td></td><td></td><td></td></tr>
                        <tr><td></td><td></td><td></td><td></td></tr>
                        <tr><td></td><td></td><td></td><td></td></tr>
                        <tr><td></td><td></td><td></td><td></td></tr>
                        <tr><td></td><td></td><td></td><td></td></tr>
                        <tr><td></td><td></td><td></td><td></td></tr>
                        <tr><td></td><td></td><td></td><td></td></tr>
                        <tr><td></td><td></td><td></td><td></td></tr>
                    </tbody>
                </table>
            </div>
            <div class="hscroll">
                <button aria-label="向左"><svg width="8" height="8"><path d="M6 0 2 4l4 4" fill="none" stroke="#505050" stroke-width="2"/></svg></button>
                <div class="track"><div class="thumb"></div></div>
                <button aria-label="向右"><svg width="8" height="8"><path d="M2 0l4 4-4 4" fill="none" stroke="#505050" stroke-width="2"/></svg></button>
            </div>
        </div>
        <div class="splitter"></div>
        <button class="fold">XY 结果视图<svg width="12" height="10"><path d="M1 1h2l3 5 3-5h2L7 9H5z" fill="#00688b"/></svg></button>
        <button class="fold">预览<svg width="12" height="10"><path d="M1 1h2l3 5 3-5h2L7 9H5z" fill="#00688b"/></svg></button>
        <button class="fold">模态形状细节<svg width="12" height="10"><path d="M1 1h2l3 5 3-5h2L7 9H5z" fill="#00688b"/></svg></button>
    </section>

    <section class="viewer">
        <div class="doc-tabs">
            <button class="doc"><svg width="16" height="13"><use href="#mech"/></svg>_model1.prt<svg width="12" height="13"><use href="#edit"/></svg></button>
            <button class="doc active"><svg width="16" height="13"><use href="#mech"/></svg>(仿真) _model1_motion1.sim<svg width="12" height="13"><use href="#edit"/></svg><svg width="10" height="10"><path d="M1 1l8 8M9 1 1 9" stroke="#fff" stroke-width="2.200"/></svg></button>
        </div>
        <div class="scene">
            <svg class="model" viewBox="574 204 706 805" preserveAspectRatio="xMinYMin slice">
                <defs>
                    <linearGradient id="sky" gradientUnits="userSpaceOnUse" x1="0" y1="204" x2="0" y2="1009"><stop offset="0" stop-color="#b1b2b4"/><stop offset=".78" stop-color="#e6e7e9"/><stop offset="1" stop-color="#e8e9eb"/></linearGradient>
                    <linearGradient id="fillet" x1="0" x2="1"><stop offset="0" stop-color="#555"/><stop offset="1" stop-color="#686868"/></linearGradient>
                    <linearGradient id="rim" x1="0" x2="1"><stop offset="0" stop-color="#007600"/><stop offset="1" stop-color="#008800"/></linearGradient>
                </defs>
                <rect x="574" y="204" width="706" height="805" fill="url(#sky)"/>
                <g stroke="#303030" stroke-linejoin="round">
                    <!-- rear post -->
                    <path d="M730 200H755L760 219V226z" fill="#575757"/>
                    <path d="M760 219 793 223V250L758 226z" fill="url(#fillet)"/>
                    <path d="M793 223 842 208V284L793 250z" fill="#676767"/>
                    <path d="M752 200 759 216Q764 225 793 223L842 208 834 200z" fill="#9d9d9d"/>
                    <!-- base -->
                    <path d="M570 280 860 440 828 447 570 525z" fill="#676767"/>
                    <path d="M570 525 828 447 1030 411 1193 361 1290 405V720L1276 694 1071 756 604 541V785L570 769z" fill="#9d9d9d"/>
                    <path d="M604 541 809 478 842 481" fill="none"/>
                    <path d="M1130 511 1290 585V605L1130 531z" fill="#565656"/>
                    <path d="M1060 520 1135 533 1290 604V677L1077 577z" fill="#bfd6dc"/>
                    <path d="M570 769 604 785V541L1071 756V1015H716L570 948z" fill="#575757"/>
                    <path d="M1166 831 1229 811V849L1290 830V888z" fill="#575757"/>
                    <path d="M1180 826 1229 849" fill="none"/>
                    <path d="M1071 756 1276 694 1281 676H1290V830L1229 849V811L1150 835V1015H1071z" fill="#676767"/>
                    <path d="M1276 694V740L1280 727V739L1276 740" fill="#9d9d9d"/>
                    <!-- disc -->
                    <path d="M570 270 700 350 696 358Q646 388 570 398z" fill="url(#rim)"/>
                    <path d="M574 397Q646 386 698 358" fill="none" stroke="#003c00" stroke-width="2"/>
                    <path d="M570 270 656 326Q618 341 570 348z" fill="#2cf72c"/>
                    <path d="M570 270 649 322Q610 337 570 342z" fill="#00c400"/>
                    <path d="M575 299l6-2M585 295l14-6" stroke="#9c9450" stroke-width="2"/>
                    <!-- crank bar -->
                    <path d="M570 271 570 215 935 464 1077 560V568L1000 568z" fill="#0000b3"/>
                    <path d="M1060 514 1119 503V559L1060 571z" fill="#0000c8"/>
                    <path d="M1119 503 1135 482V539L1119 559z" fill="#0000dc"/>
                    <path d="M570 200H725L1135 482 1119 503 1060 514 1010 514 570 215z" fill="#00f"/>
                    <ellipse cx="642" cy="204" rx="40" ry="16" fill="#00bfff"/>
                    <ellipse cx="1075" cy="481" rx="12" ry="9" fill="#bfd6dc"/>
                </g>
                <g fill="none" stroke="#d09838">
                    <ellipse cx="1046" cy="450" rx="13" ry="5" stroke-width="2"/>
                    <path d="M1033 450v20M1059 450v20M1038 454v16M1054 446v24M1042 455v15M1050 455v15" stroke-width="2"/>
                    <path d="M628 205h9M637 204v6M629 204v3M650 204v5M655 205h31" stroke-width="2" stroke-dasharray="4 1"/>
                </g>
                <text x="1066" y="482" class="joint-tag">J03</text>
                <!-- view triad -->
                <path d="M638 926 657 920 674 927V951L656 957 638 950z" fill="#b0b0b0"/>
                <path d="M674 927V951L656 957V933z" fill="#a0a0a0" opacity=".4"/>
                <path d="M638 949 670 940" stroke="#90c890" stroke-width="2"/>
                <path d="M638 949V914" stroke="#0838d8" stroke-width="3"/><path d="M637.500 909 641 920H634z" fill="#0838d8"/>
                <path d="M640 951 660 960" stroke="#d82020" stroke-width="3"/><path d="M666 963 656 962 660 956z" fill="#d82020"/>
                <circle cx="637" cy="950" r="4" fill="#ddd"/>
                <text x="633" y="909" class="axis z">Z</text>
                <text x="672" y="943" class="axis y">Y</text>
                <text x="664" y="969" class="axis x">X</text>
                <text x="579" y="1011" class="model-tag">MODEL_1</text>
            </svg>
            <div class="dialog" role="alertdialog" aria-labelledby="dlg-title">
                <h3 id="dlg-title">求解</h3>
                <div class="dialog-body">
                    <svg width="32" height="32"><circle cx="16" cy="16" r="15" fill="#eee" stroke="#707070"/><circle cx="16" cy="16" r="13.500" fill="url(#gRed)"/><path d="M9 9l14 14M23 9 9 23" stroke="#f4f4f4" stroke-width="4.500"/></svg>
                    <p>没有写权限</p>
                </div>
                <button class="ok">确定(<u>O</u>)</button>
            </div>
        </div>
    </section>
</main>

</body>
</html>
```
FILE: styles.css
```css
* { box-sizing: border-box; }
body {
    margin: 0;
    height: 100vh;
    display: flex;
    flex-direction: column;
    overflow: hidden;
    background: #fff;
    color: #1a1a1a;
    font: 12px/16px "Noto Sans", "Noto Sans CJK SC", sans-serif;
}
button {
    font: inherit;
    color: inherit;
    background: none;
    border: 0;
    margin: 0;
    padding: 0;
}
h1, h2, h3, p { margin: 0; font-size: 12px; font-weight: normal; }
svg { display: block; flex: none; }
.sprite { position: absolute; width: 0; height: 0; }

.caret {
    flex: none;
    width: 0;
    height: 0;
    border: 3px solid transparent;
    border-top-color: #111;
    border-bottom: 0;
}
.caret.dim { border-top-color: #999; }
.sep {
    flex: none;
    width: 1px;
    height: 20px;
    background: #d4d4d4;
}

/* Title bar */
.titlebar {
    flex: none;
    display: flex;
    align-items: center;
    height: 26px;
    padding-left: 4px;
    font-size: 11px;
}
.logo {
    width: 37px;
    color: #8299a8;
    font: bold 23px/26px "Liberation Sans", sans-serif;
}
.qa {
    display: flex;
    align-items: center;
    justify-content: center;
    width: 24px;
    height: 24px;
}
.qa.narrow { width: 20px; }
.titlebar .sep { margin: 0 4px 0 3px; }
.titlebar .logo + .sep { margin: 0 5px 0 0; }
.titlebar .caret + .sep { margin-right: 3px; }
.titlebar > .qa + .caret { margin: 0 2px; }
.qa-text {
    display: flex;
    align-items: center;
    gap: 4px;
    margin: 0 5px 0 0;
}
.qa-text .caret { margin-left: 2px; }
.caret.bar { position: relative; }
.caret.bar::before {
    content: "";
    position: absolute;
    left: -3px;
    top: -6px;
    width: 6px;
    height: 1px;
    background: #111;
}
.app-title { margin: 0 157px 0 auto; color: #000; font-size: 13px; }

/* Ribbon tabs */
.tabs {
    flex: none;
    display: flex;
    height: 28px;
    background: #dcdcdc;
    font-size: 13px;
}
.tab { padding: 0 13px 1px; color: #222; }
.tab.file { width: 81px; margin-right: 2px; background: #54a0b9; color: #fff; }
.tab.active { background: #fff; color: #00688b; border-top: 1px solid #aaa; }

/* Ribbon */
.ribbon {
    flex: none;
    display: flex;
    height: 94px;
    padding-top: 5px;
    border-bottom: 1px solid #dcdcdc;
    overflow: hidden;
    font-size: 11px;
}
.group {
    flex: none;
    display: flex;
    flex-direction: column;
    justify-content: space-between;
    height: 84px;
    padding: 0 8px;
    border-right: 1px solid #d8d8d8;
}
.g-solution { width: 109px; }
.g-mech { width: 293px; }
.g-couple { width: 142px; }
.g-connect { width: 128px; }
.g-contact { width: 115px; }
.g-constrain { width: 98px; }
.g-load { width: 109px; }
.g-sub { width: 96px; }
.g-flex { width: 131px; }
.g-control { width: 131px; border: 0; }
.tools { display: flex; }
.big {
    flex: none;
    display: flex;
    flex-direction: column;
    align-items: center;
    min-width: 40px;
    padding: 0 4px;
    line-height: 16px;
    white-space: nowrap;
}
.g-mech .big { padding: 0 5px; }
.big svg { margin-bottom: 4px; }
.big svg[height="30"] { margin: 1px 0 5px; }
.big .caret { margin-top: 5px; }
.small-list { padding: 0 0 0 4px; }
.small {
    display: flex;
    align-items: center;
    gap: 4px;
    height: 22px;
    white-space: nowrap;
}
.small:first-child { height: 14px; margin-bottom: 4px; }
.group-name {
    position: relative;
    padding-right: 17px;
    text-align: center;
    color: #00688b;
    line-height: 12px;
}
.group-name .caret { position: absolute; right: 0; top: 4px; }

/* Selection bar */
.toolbar {
    flex: none;
    display: flex;
    align-items: center;
    height: 32px;
    padding-left: 11px;
    border-bottom: 1px solid #8a8a8a;
    overflow: hidden;
    font-size: 11px;
}
.menu-btn { display: flex; align-items: center; white-space: nowrap; width: 70px; }
.menu-btn svg { margin-right: 3px; }
.menu-btn .caret { margin-left: auto; }
.toolbar .sep { margin: 0 13px 0 5px; }
.combo { position: relative; margin-right: 9px; flex: none; }
.combo select {
    display: block;
    width: 100%;
    height: 20px;
    padding: 0 2px;
    appearance: none;
    border: 1px solid #8c8c8c;
    border-radius: 0;
    background: #fff;
    color: #111;
    font: inherit;
}
.combo::after {
    content: "";
    position: absolute;
    right: 5px;
    top: 9px;
    border: 4px solid transparent;
    border-top-color: #111;
    border-bottom: 0;
}
.combo.filter { width: 133px; }
.combo.scope { width: 141px; margin-right: 4px; }
.icons { display: flex; align-items: center; gap: 2px; }
.ic {
    flex: none;
    display: flex;
    align-items: center;
    justify-content: center;
    width: 23px;
    height: 22px;
}
.ic.on { background: #cde6ec; border: 1px solid #a4ccd8; }
.icons .caret { margin: 0 1px 0 0; }
.icons .caret.wide { margin: 0 3px 0 2px; }
.icons .sep { margin: 0 6px 0 4px; }

/* Work area */
.work { flex: 1; display: flex; min-height: 0; }
.rail {
    flex: none;
    width: 32px;
    padding-left: 2px;
    background: #dcdcdc;
    border-right: 1px solid #a4a4a4;
    overflow: hidden;
}
.rb {
    display: flex;
    align-items: center;
    justify-content: center;
    width: 100%;
    height: 42px;
    padding-left: 3px;
}
.rb.gear-btn { height: 26px; margin-bottom: 14px; padding: 0 3px 0 0; }
.rb.active { height: 45px; width: 30px; background: #fff; border: 1px solid #a4a4a4; border-right: 0; }
.rb.spaced { margin-top: 12px; }

/* Navigator */
.navigator {
    flex: none;
    display: flex;
    flex-direction: column;
    width: 539px;
    padding: 0 9px 0 6px;
}
.nav-head {
    display: flex;
    align-items: center;
    justify-content: space-between;
    height: 28px;
    padding: 2px 7px 0 4px;
}
.max-btn { width: 12px; height: 11px; border: 1px solid #111; border-top-width: 2px; }
.tree-box {
    flex: 1;
    min-height: 0;
    display: flex;
    flex-direction: column;
    border: 1px solid #d8d8d8;
    padding: 1px 1px 1px 0;
}
.tree-clip { flex: 1; min-height: 0; overflow: hidden; margin-bottom: 2px; }
.tree { width: 100%; table-layout: fixed; border-collapse: separate; border-spacing: 0; }
.c-name { width: 161px; }
.c-state { width: 100px; }
.c-env { width: 200px; }
.tree th {
    height: 21px;
    padding: 1px 6px 0;
    background: #efefef;
    border-right: 1px solid #d0d0d0;
    border-bottom: 1px solid #d0d0d0;
    text-align: left;
    font-weight: normal;
}
.tree td {
    height: 20px;
    padding: 0 4px;
    border-right: 1px solid #e8e8e8;
    border-bottom: 1px solid #e8e8e8;
    line-height: 16px;
    white-space: nowrap;
}
.tree td:first-child { padding: 0 0 0 1px; }
.tree th:last-child, .tree td:last-child { border-right: 0; }
.tree tr:nth-child(even) td { background: #fafafa; }
.tree .current { color: #00f; }
.node { display: flex; align-items: center; gap: 3px; height: 19px; }
.node.root { padding-left: 1px; }
.guide { width: 19px; height: 20px; margin-right: -2px; }
.guide + .guide { margin-left: -1px; }
.node input {
    appearance: none;
    position: relative;
    width: 13px;
    height: 12px;
    margin: 0;
    border: 1px solid #000;
    background: #fff;
}
.node input:checked::after {
    content: "";
    position: absolute;
    inset: 0;
    background: #e00000;
    clip-path: polygon(0 45%, 25% 40%, 40% 65%, 80% 0, 100% 5%, 50% 100%, 30% 100%);
}

.hscroll { display: flex; height: 16px; background: #f0f0f0; }
.hscroll button { width: 18px; display: flex; align-items: center; justify-content: center; }
.track { flex: 1; }
.thumb { width: 60%; height: 15px; background: #cdcdcd; }
.splitter {
    flex: none;
    height: 5px;
    background: #dcdcdc;
    border: 1px solid #a8a8a8;
}
.fold {
    flex: none;
    display: flex;
    align-items: center;
    justify-content: space-between;
    height: 24px;
    padding: 2px 6px 0 7px;
    border-bottom: 2px solid #d4d4d4;
    color: #00688b;
    font-size: 14px;
}
.fold:last-child { height: 21px; border: 0; }

/* Graphics window */
.viewer {
    flex: 1;
    min-width: 0;
    display: flex;
    flex-direction: column;
    border-left: 1px solid #80909c;
}
.doc-tabs {
    flex: none;
    display: flex;
    gap: 5px;
    height: 23px;
    border-bottom: 2px solid #54a0b9;
}
.doc { display: flex; align-items: center; gap: 6px; padding: 0 5px; white-space: nowrap; width: 128px; }
.doc.active { width: auto; background: #54a0b9; color: #fff; }
.scene {
    flex: 1;
    min-height: 0;
    position: relative;
    margin-left: 1px;
    border: solid #f0a048;
    border-width: 1px 0 0 1px;
    overflow: hidden;
}
.model { width: 100%; height: 100%; }
.joint-tag, .model-tag, .axis { font: 13px "Liberation Sans", sans-serif; fill: #f0a058; }
.joint-tag { fill: #d09838; }
.axis.z { fill: #2858f8; }
.axis.y { fill: #38a038; }
.axis.x { fill: #e03030; }

/* Error dialog */
.dialog {
    position: absolute;
    left: 268px;
    top: 260px;
    width: 236px;
    display: flex;
    flex-direction: column;
    background: #f0f0f0;
    border: 1px solid #aaa;
    border-top: 0;
}
.dialog h3 {
    height: 28px;
    margin: 0 -1px;
    padding-left: 9px;
    line-height: 28px;
    background: #54a0b9;
    color: #fff;
}
.dialog-body { display: flex; align-items: center; gap: 14px; padding: 8px 10px; }
.ok {
    align-self: center;
    width: 63px;
    height: 25px;
    margin: 1px 0 10px;
    background: #74b4c8;
    color: #fff;
    outline: 1px dotted #000;
    outline-offset: -4px;
}
```
